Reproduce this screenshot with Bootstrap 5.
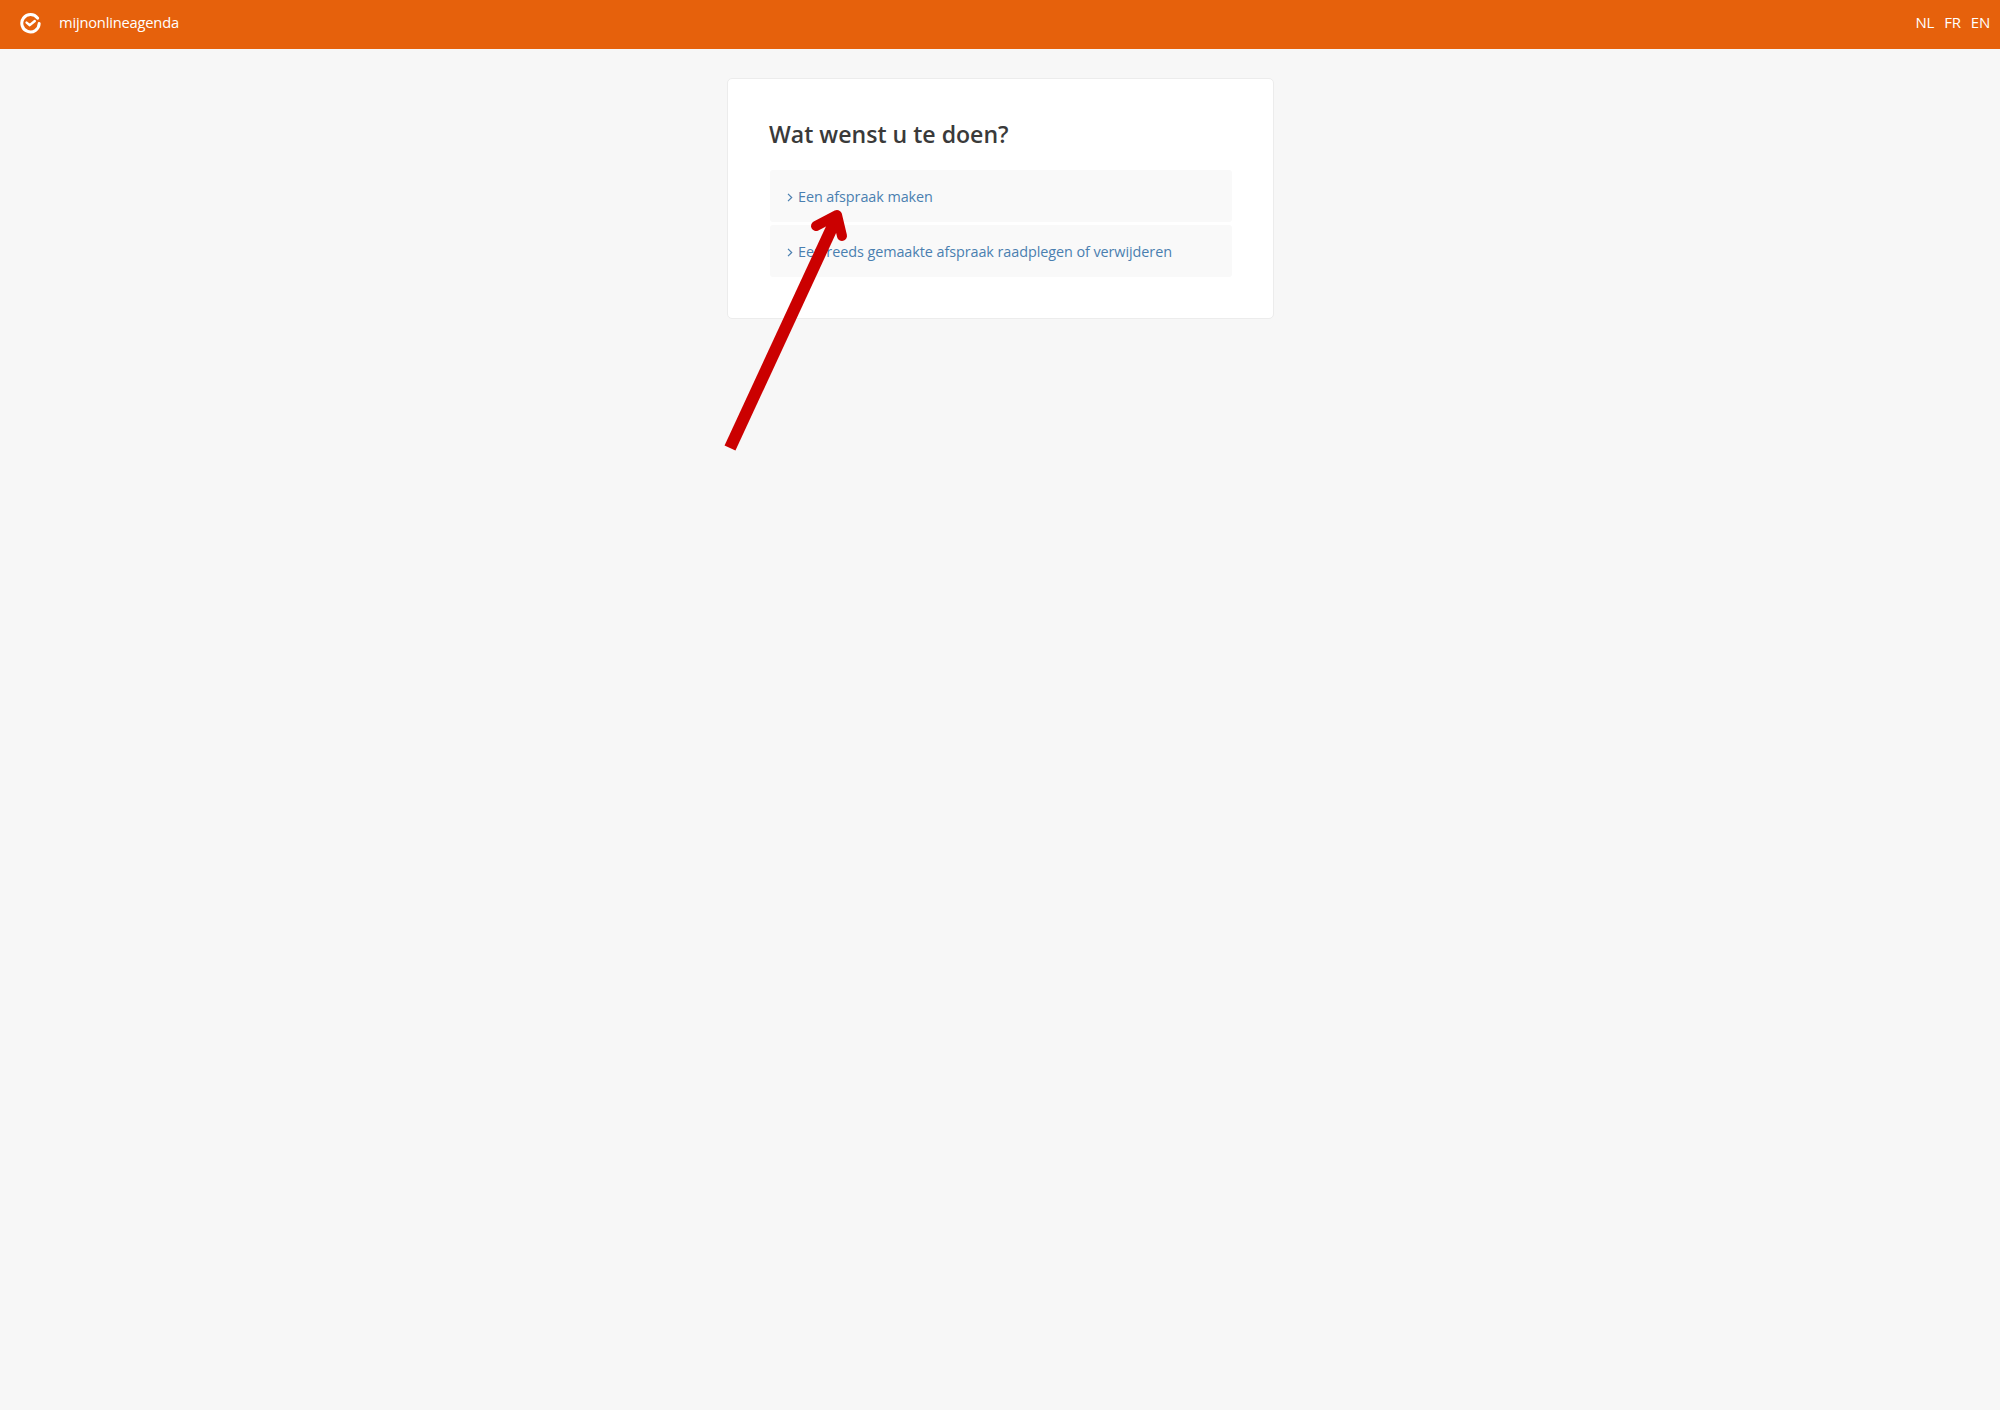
<!DOCTYPE html>
<html lang="nl">
<head>
<meta charset="utf-8">
<title>mijnonlineagenda</title>
<link href="https://cdn.jsdelivr.net/npm/bootstrap@5.3.0/dist/css/bootstrap.min.css" rel="stylesheet">
<style>
html, body { height: 100%; }
body { background: #f7f7f7; font-family: "Open Sans", "Noto Sans", "Liberation Sans", sans-serif; color: #333; font-size: 14px; }
.topbar { background: #e6610c; height: 49px; padding: 0 10px 4px 20px; color: #fff; }
.brand-name { font-size: 14.7px; color: #fff; text-decoration: none; letter-spacing: -.2px; gap: 18px; }
.brand-icon { margin-top: 2px; }
.lang-link { color: #fff; text-decoration: none; font-size: 15px; letter-spacing: -.2px; }
.lang-list { gap: 10px; }
.choice-card { width: 547px; height: 241px; margin: 29px 0 0 calc(50% - 273px); padding: 40px 41px 0 42px; border: 1px solid #ececec; border-radius: 5px; background: #fff; }
.choice-title { font-size: 23.1px; line-height: 30px; font-weight: 600; color: #3a3a3a; margin: 0 0 21px -1px; }
.choice-item { height: 52px; background: #f9f9f9; border-radius: 3px; padding: 2px 0 0 17px; color: #4a7fb0; text-decoration: none; font-size: 14.4px; letter-spacing: -.07px; gap: 5px; }
.choice-item + .choice-item { margin-top: 3px; }
.arrow-overlay { position: absolute; left: 0; top: 0; pointer-events: none; }
</style>
</head>
<body class="position-relative">
<header class="topbar d-flex align-items-center justify-content-between">
  <a class="brand-name d-flex align-items-center" href="#">
    <svg class="brand-icon" width="21" height="21" viewBox="0 0 21 21" fill="none" stroke="#fff" stroke-width="3" stroke-linecap="round" stroke-linejoin="round">
      <path d="M17.6 5.2A8.7 8.7 0 1 0 19.2 10.5"/>
      <path d="M6.6 9.6l3.2 2.6 5-4.2" stroke-width="2.4"/>
    </svg>
    <span>mijnonlineagenda</span>
  </a>
  <nav class="lang-list d-flex">
    <a class="lang-link" href="#">NL</a>
    <a class="lang-link" href="#">FR</a>
    <a class="lang-link" href="#">EN</a>
  </nav>
</header>
<main class="choice-card">
  <h1 class="choice-title">Wat wenst u te doen?</h1>
  <div class="d-flex flex-column">
    <a class="choice-item d-flex align-items-center" href="#"><svg width="6" height="9" viewBox="0 0 6 9" fill="none" stroke="#4a7fb0" stroke-width="1.2"><path d="M1 .8l3.7 3.7L1 8.2"/></svg><span>Een afspraak maken</span></a>
    <a class="choice-item d-flex align-items-center" href="#"><svg width="6" height="9" viewBox="0 0 6 9" fill="none" stroke="#4a7fb0" stroke-width="1.2"><path d="M1 .8l3.7 3.7L1 8.2"/></svg><span>Een reeds gemaakte afspraak raadplegen of verwijderen</span></a>
  </div>
</main>
<svg class="arrow-overlay" width="2000" height="1410" viewBox="0 0 2000 1410" fill="none" stroke="#cb0000">
  <path d="M730 448L836 219" stroke-width="12"/>
  <path d="M816 226L837 215L842 236" stroke-width="10" stroke-linecap="round" stroke-linejoin="round"/>
</svg>
<script src="https://cdn.jsdelivr.net/npm/bootstrap@5.3.0/dist/js/bootstrap.bundle.min.js"></script>
</body>
</html>
